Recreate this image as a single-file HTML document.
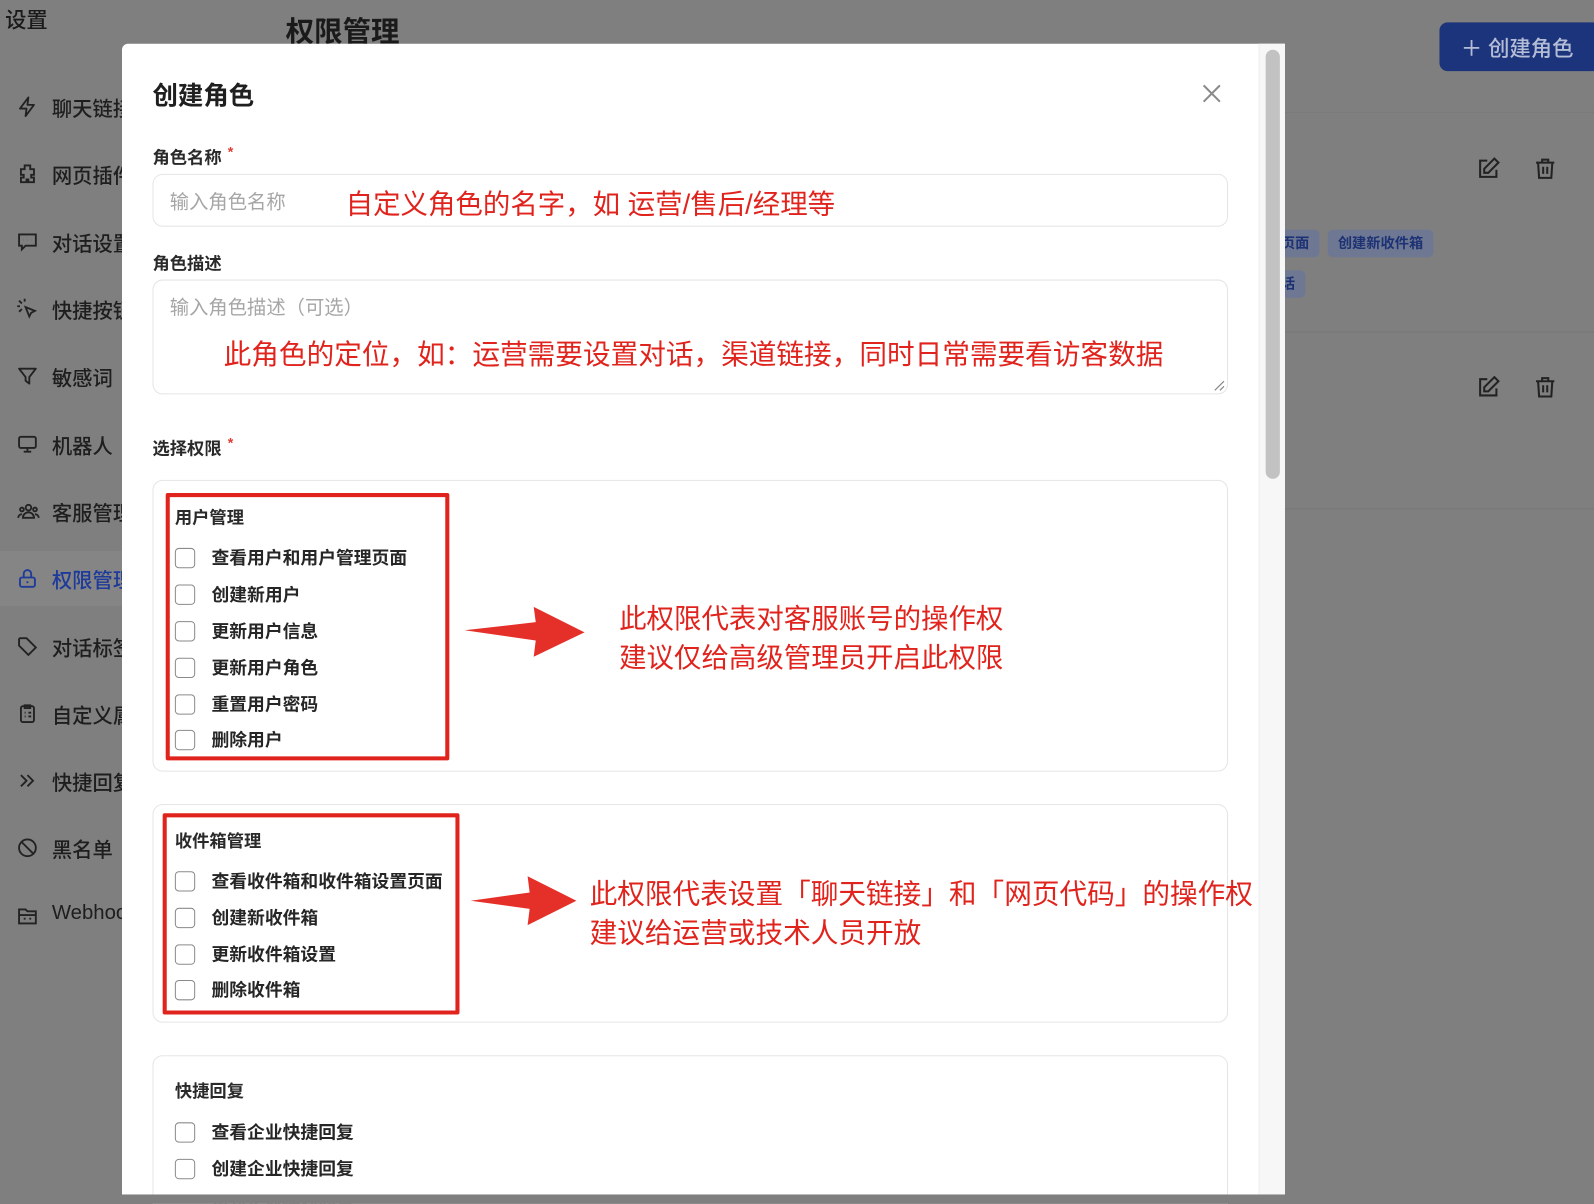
<!DOCTYPE html>
<html><head><meta charset="utf-8"><style>
*{margin:0;padding:0;box-sizing:border-box}
html,body{width:1594px;height:1204px;overflow:hidden;background:#7f7f7f}
body{font-family:"Liberation Sans","Noto Sans CJK SC",sans-serif}
#w{position:absolute;left:0;top:0;width:1568px;height:1184px;transform:scale(1.01658);transform-origin:0 0;background:#7f7f7f;overflow:hidden}
.a{position:absolute;white-space:nowrap}
.si{position:absolute;left:0;width:130px;height:50px;overflow:hidden}
.si svg{position:absolute;left:16px;top:14px}
.si span{position:absolute;left:51px;top:11px;font-size:20px;color:#1e1e1e;font-weight:500;white-space:nowrap}
.lbl{font-size:17px;font-weight:700;color:#2a2a2a}
.star{color:#e03a32;font-size:14px;margin-left:6px;vertical-align:top}
.box{position:absolute;border:1px solid #e5e5e5;border-radius:10px;background:#fff}
.cb{position:absolute;left:172px;width:20px;height:20px;border:1.5px solid #8a8a8a;border-radius:4px;background:#fff}
.it{position:absolute;left:208px;font-size:17.5px;font-weight:700;color:#262626;white-space:nowrap}
.red{color:#e0231c;position:absolute;white-space:nowrap}
.rb{position:absolute;border:4px solid #e0231c;border-radius:2px}
.tag{position:absolute;background:#6f7892;color:#1d3275;font-size:14px;font-weight:700;border-radius:5px;height:27px;line-height:27px;padding:0 10px}
</style></head><body><div id="w">
<div class="a" style="left:5px;top:4px;font-size:21px;color:#1a1a1a;font-weight:500">设置</div>
<div class="a" style="left:281px;top:10px;font-size:28px;color:#1a1a1a;font-weight:700">权限管理</div>

<div style="position:absolute;left:0;top:542px;width:130px;height:54px;background:#858585;border-radius:0 8px 8px 0"></div>
<div class="si" style="top:80px"><svg width="22" height="22" viewBox="0 0 24 24" fill="none" stroke="#222" stroke-width="2" stroke-linejoin="round"><path d="M13 2 4 14h7l-1 8 9-12h-7z"/></svg><span>聊天链接</span></div>
<div class="si" style="top:146px"><svg width="22" height="22" viewBox="0 0 24 24" fill="none" stroke="#222" stroke-width="2"><path d="M9 3h6v4h4v6h-3v3h3v5h-6v-3h-2v3H5v-5h3v-3H5V7h4z"/></svg><span>网页插件</span></div>
<div class="si" style="top:213px"><svg width="22" height="22" viewBox="0 0 24 24" fill="none" stroke="#222" stroke-width="2"><path d="M3 4h18v12H10l-4 4v-4H3z"/><path d="M8 10h.1M12 10h.1M16 10h.1"/></svg><span>对话设置</span></div>
<div class="si" style="top:279px"><svg width="22" height="22" viewBox="0 0 24 24" fill="none" stroke="#222" stroke-width="2"><path d="M10 10l10 4-4 2-2 4z"/><path d="M3 3l3 3M9 1v3M1 9h3M3 15l3-3"/></svg><span>快捷按钮</span></div>
<div class="si" style="top:345px"><svg width="22" height="22" viewBox="0 0 24 24" fill="none" stroke="#222" stroke-width="2" stroke-linejoin="round"><path d="M3 4h18l-7 9v7l-4-3v-4z"/></svg><span>敏感词</span></div>
<div class="si" style="top:412px"><svg width="22" height="22" viewBox="0 0 24 24" fill="none" stroke="#222" stroke-width="2"><rect x="3" y="4" width="18" height="12" rx="2"/><path d="M8 20h8M12 16v4"/></svg><span>机器人</span></div>
<div class="si" style="top:478px"><svg width="24" height="22" viewBox="0 0 24 24" fill="none" stroke="#222" stroke-width="2"><circle cx="12" cy="8" r="3"/><circle cx="5" cy="10" r="2"/><circle cx="19" cy="10" r="2"/><path d="M6 19a6 6 0 0 1 12 0zM1 19a4 4 0 0 1 4-4M23 19a4 4 0 0 0-4-4"/></svg><span>客服管理</span></div>
<div class="si" style="top:544px"><svg width="22" height="22" viewBox="0 0 24 24" fill="none" stroke="#1e3a9a" stroke-width="2"><rect x="4" y="11" width="16" height="10" rx="2"/><path d="M8 11V7a4 4 0 0 1 8 0v4M12 15v2"/></svg><span style="color:#1e3a9a">权限管理</span></div>
<div class="si" style="top:611px"><svg width="22" height="22" viewBox="0 0 24 24" fill="none" stroke="#222" stroke-width="2"><path d="M3 4v7l10 10 8-8L11 3H4z"/></svg><span>对话标签</span></div>
<div class="si" style="top:677px"><svg width="22" height="22" viewBox="0 0 24 24" fill="none" stroke="#222" stroke-width="2"><rect x="5" y="4" width="14" height="17" rx="2"/><path d="M9 3h6v3H9zM9 11h1M13 11h3M9 15h1M13 15h3"/></svg><span>自定义属性</span></div>
<div class="si" style="top:743px"><svg width="22" height="22" viewBox="0 0 24 24" fill="none" stroke="#222" stroke-width="2"><path d="M5 6l6 6-6 6M12 6l6 6-6 6"/></svg><span>快捷回复</span></div>
<div class="si" style="top:809px"><svg width="22" height="22" viewBox="0 0 24 24" fill="none" stroke="#222" stroke-width="2"><circle cx="12" cy="12" r="9"/><path d="M6 6l12 12"/></svg><span>黑名单</span></div>
<div class="si" style="top:876px"><svg width="22" height="22" viewBox="0 0 24 24" fill="none" stroke="#222" stroke-width="2"><path d="M3 5h7l2 2h9v13H3z"/><path d="M3 11h18M8 15h2M14 15h2"/></svg><span>Webhook</span></div>

<div style="position:absolute;left:1416px;top:22px;width:160px;height:48px;background:#1c347c;border-radius:8px"></div>
<div class="a" style="left:1437px;top:32px;font-size:21px;color:#b4bdd6;font-weight:500">＋ 创建角色</div>
<div style="position:absolute;left:1264px;top:110px;width:304px;height:1px;background:#7a7a7a"></div>
<div style="position:absolute;left:1264px;top:326px;width:304px;height:1px;background:#777"></div>
<div style="position:absolute;left:1264px;top:500px;width:304px;height:1px;background:#777"></div>
<div class="tag" style="left:1250px;top:226px">页面</div>
<div class="tag" style="left:1306px;top:226px">创建新收件箱</div>
<div class="tag" style="left:1250px;top:266px">话</div>
<svg class="a" style="left:1452px;top:154px" width="24" height="24" viewBox="0 0 24 24" fill="none" stroke="#222" stroke-width="2"><path d="M11 4H4v16h16v-7"/><path d="M18 2l4 4-10 10H8v-4z"/></svg>
<svg class="a" style="left:1508px;top:154px" width="24" height="24" viewBox="0 0 24 24" fill="none" stroke="#222" stroke-width="2"><path d="M3 6h18M9 6V3h6v3M5 6l1 15h12l1-15M10 10v7M14 10v7"/></svg>
<svg class="a" style="left:1452px;top:369px" width="24" height="24" viewBox="0 0 24 24" fill="none" stroke="#222" stroke-width="2"><path d="M11 4H4v16h16v-7"/><path d="M18 2l4 4-10 10H8v-4z"/></svg>
<svg class="a" style="left:1508px;top:369px" width="24" height="24" viewBox="0 0 24 24" fill="none" stroke="#222" stroke-width="2"><path d="M3 6h18M9 6V3h6v3M5 6l1 15h12l1-15M10 10v7M14 10v7"/></svg>

<!-- modal -->
<div style="position:absolute;left:120px;top:43px;width:1144px;height:1132px;background:#fff;border-radius:6px 0 0 0"></div>
<div style="position:absolute;left:1238px;top:43px;width:26px;height:1132px;background:#f7f7f7;border-left:1px solid #eee"></div>
<div style="position:absolute;left:1245px;top:49px;width:14px;height:422px;background:#c2c2c2;border-radius:7px"></div>
<div class="a" style="left:150px;top:75px;font-size:25px;font-weight:700;color:#1f1f1f">创建角色</div>
<svg class="a" style="left:1182px;top:82px" width="20" height="20" viewBox="0 0 20 20" stroke="#8a8a8a" stroke-width="2"><path d="M2 2l16 16M18 2L2 18"/></svg>

<div class="a lbl" style="left:150px;top:141px">角色名称<span class="star">*</span></div>
<div class="box" style="left:150px;top:171px;width:1058px;height:52px"></div>
<div class="a" style="left:167px;top:184px;font-size:19px;color:#a6a6a6">输入角色名称</div>
<div class="red" style="left:340px;top:179px;font-size:27px">自定义角色的名字，如 运营/售后/经理等</div>

<div class="a lbl" style="left:150px;top:245px">角色描述</div>
<div class="box" style="left:150px;top:275px;width:1058px;height:113px"></div>
<div class="a" style="left:167px;top:288px;font-size:19px;color:#a6a6a6">输入角色描述（可选）</div>
<div class="red" style="left:220px;top:326px;font-size:27.2px">此角色的定位，如：运营需要设置对话，渠道链接，同时日常需要看访客数据</div>
<svg class="a" style="left:1193px;top:373px" width="12" height="12" stroke="#888" stroke-width="1.2"><path d="M11 2 2 11M11 7 7 11"/></svg>

<div class="a lbl" style="left:150px;top:427px">选择权限<span class="star">*</span></div>

<div class="box" style="left:150px;top:472px;width:1058px;height:287px"></div>
<div class="rb" style="left:163px;top:485px;width:279px;height:263px"></div>
<div class="a lbl" style="left:172px;top:495px;font-size:17px">用户管理</div>
<div class="cb" style="top:539px"></div><div class="it" style="top:536px">查看用户和用户管理页面</div>
<div class="cb" style="top:575px"></div><div class="it" style="top:572px">创建新用户</div>
<div class="cb" style="top:611px"></div><div class="it" style="top:608px">更新用户信息</div>
<div class="cb" style="top:647px"></div><div class="it" style="top:644px">更新用户角色</div>
<div class="cb" style="top:683px"></div><div class="it" style="top:680px">重置用户密码</div>
<div class="cb" style="top:718px"></div><div class="it" style="top:715px">删除用户</div>
<svg class="a" style="left:455px;top:594px" width="125" height="56" viewBox="0 0 125 56"><path d="M2 26 L72 18 L70 3 L120 28 L70 52 L72 36 Z" fill="#e5302a"/></svg>
<div class="red" style="left:609px;top:590px;font-size:27px;line-height:38px">此权限代表对客服账号的操作权<br>建议仅给高级管理员开启此权限</div>

<div class="box" style="left:150px;top:791px;width:1058px;height:215px"></div>
<div class="rb" style="left:160px;top:800px;width:292px;height:198px"></div>
<div class="a lbl" style="left:172px;top:813px;font-size:17px">收件箱管理</div>
<div class="cb" style="top:857px"></div><div class="it" style="top:854px">查看收件箱和收件箱设置页面</div>
<div class="cb" style="top:893px"></div><div class="it" style="top:890px">创建新收件箱</div>
<div class="cb" style="top:929px"></div><div class="it" style="top:926px">更新收件箱设置</div>
<div class="cb" style="top:964px"></div><div class="it" style="top:961px">删除收件箱</div>
<svg class="a" style="left:461px;top:859px" width="110" height="54" viewBox="0 0 110 54"><path d="M2 27 L60 19 L58 3 L106 27 L58 51 L60 35 Z" fill="#e5302a"/></svg>
<div class="red" style="left:580px;top:861px;font-size:27.2px;line-height:38px">此权限代表设置「聊天链接」和「网页代码」的操作权<br>建议给运营或技术人员开放</div>

<div class="box" style="left:150px;top:1038px;width:1058px;height:160px"></div>
<div class="a lbl" style="left:172px;top:1059px;font-size:17px">快捷回复</div>
<div class="cb" style="top:1104px"></div><div class="it" style="top:1101px">查看企业快捷回复</div>
<div class="cb" style="top:1140px"></div><div class="it" style="top:1137px">创建企业快捷回复</div>
<div class="it" style="top:1172px">更新企业快捷回复</div>
<div style="position:absolute;left:0;top:1175px;width:1568px;height:40px;background:#7f7f7f"></div>
</div></body></html>
